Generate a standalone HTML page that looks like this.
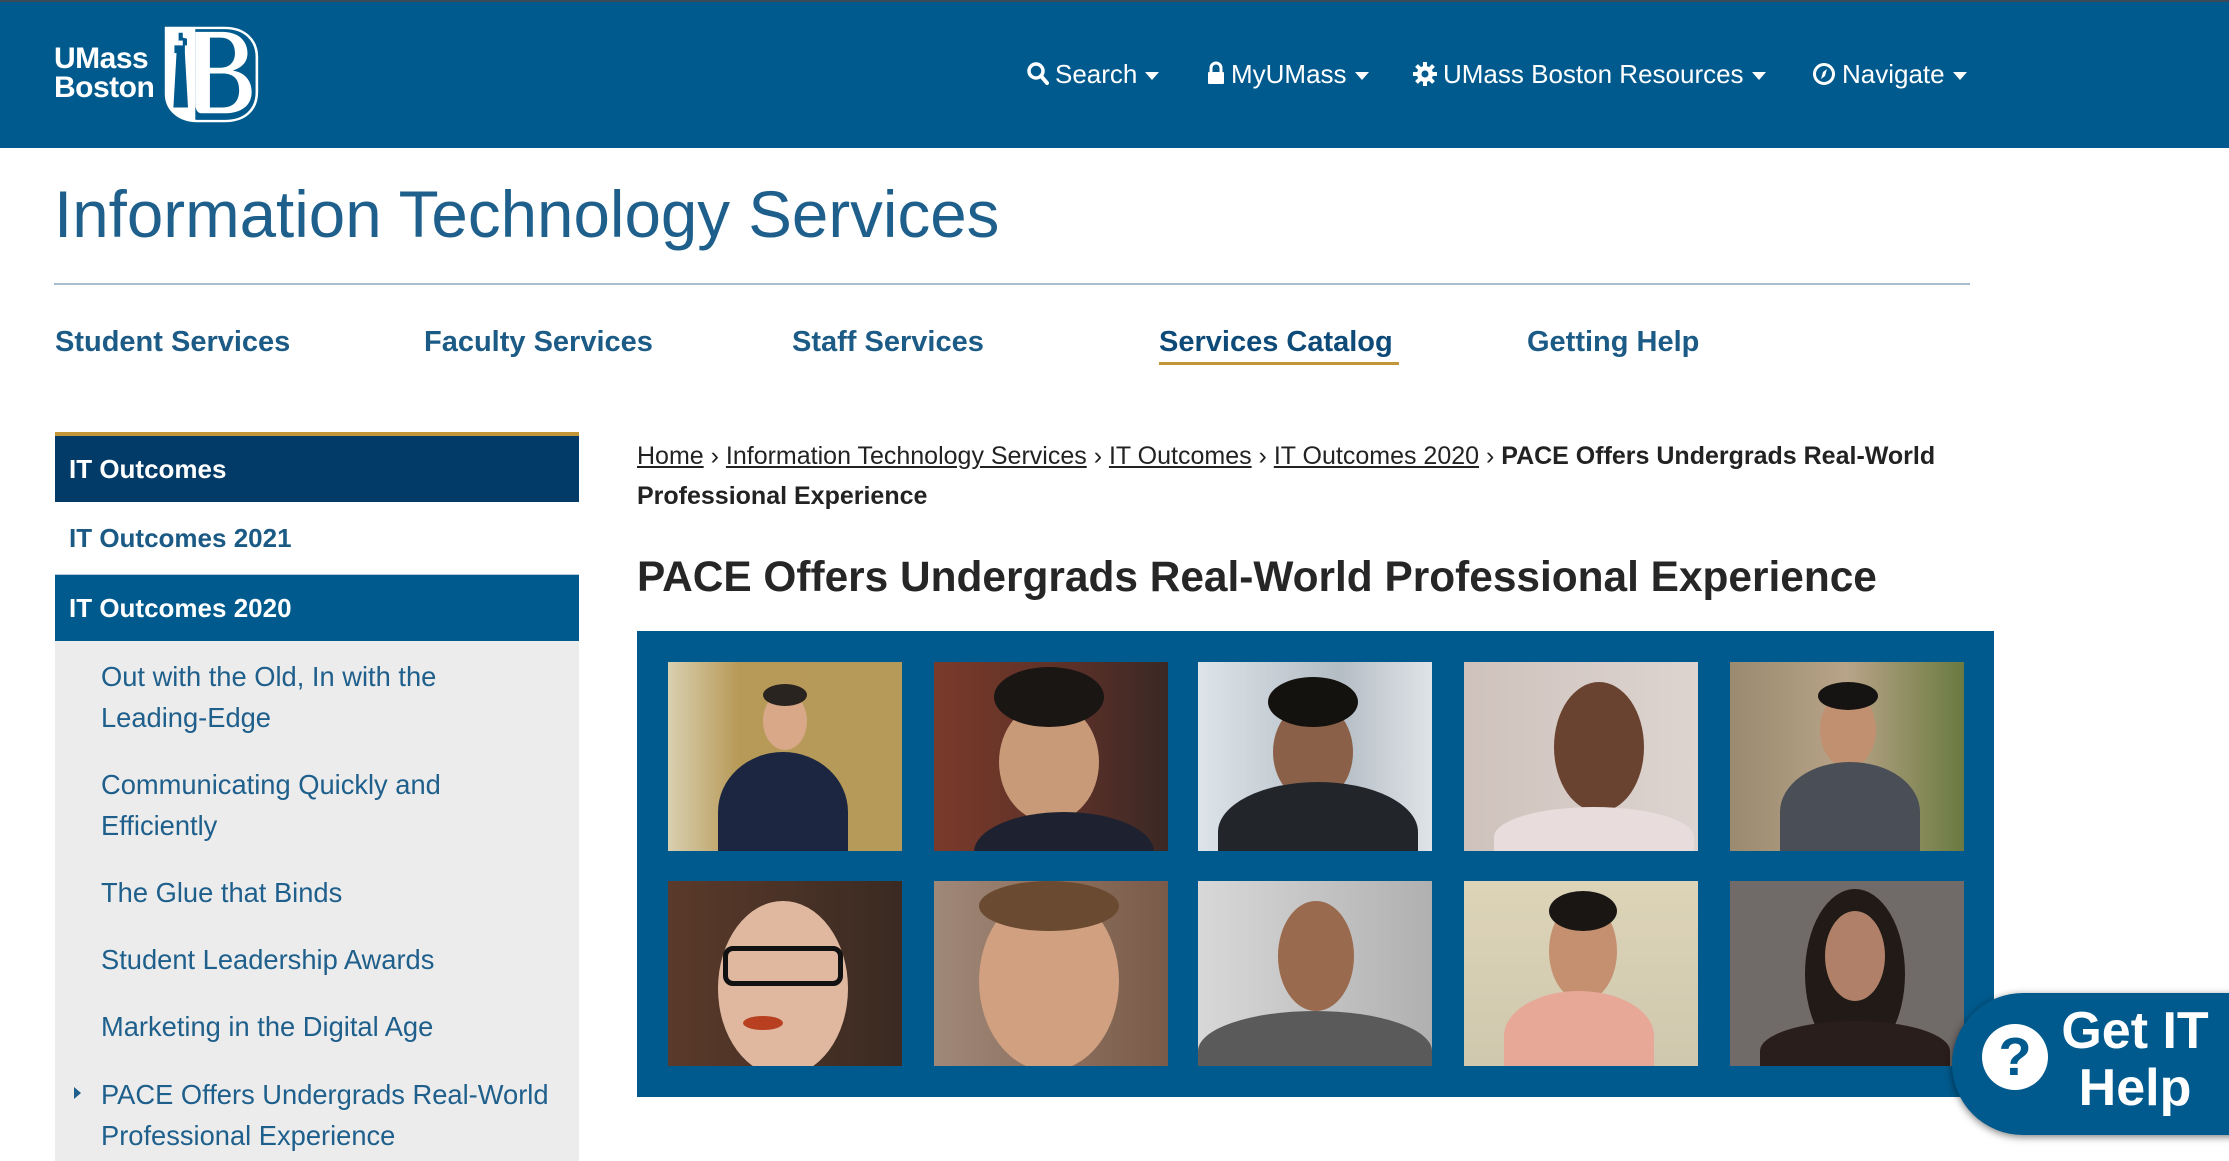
<!DOCTYPE html>
<html><head><meta charset="utf-8"><style>
*{margin:0;padding:0;box-sizing:border-box}
body{width:2229px;height:1147px;overflow:hidden;background:#fff;font-family:"Liberation Sans",Arial,sans-serif;position:relative}
.hdr{position:absolute;left:0;top:0;width:2229px;height:148px;background:#005a8d;border-top:2px solid #3a4a5a}
.abs{position:absolute}
.nav{position:absolute;top:56px;color:#fff;font-size:26px;white-space:nowrap;line-height:36px}
.caret{display:inline-block;width:0;height:0;border-left:7px solid transparent;border-right:7px solid transparent;border-top:8px solid #fff;vertical-align:middle;margin-left:8px}
.title{position:absolute;left:54px;top:177px;font-size:65.5px;color:#1e5f8c;white-space:nowrap}
.rule{position:absolute;left:54px;top:283px;width:1916px;height:2px;background:#a9bfd0}
.menu{position:absolute;top:326px;font-size:29px;font-weight:bold;color:#1c5b86;white-space:nowrap}
.side{position:absolute;left:55px;width:524px}
.sb{font-size:26px;font-weight:bold;padding-left:14px;color:#fff}
.sub{position:absolute;left:101px;font-size:27.3px;color:#1e5f8c;line-height:41px;white-space:nowrap}
.bc{position:absolute;left:637px;top:436px;font-size:25px;line-height:40px;color:#222;width:1360px}
.bc a{color:#222;text-decoration:underline}
.h1{position:absolute;left:637px;top:553px;font-size:42.4px;font-weight:bold;color:#262626;white-space:nowrap}
.pbox{position:absolute;left:637px;top:631px;width:1357px;height:466px;background:#005a8d}
.ph{position:absolute;width:234px;overflow:hidden}
.face{position:absolute;border-radius:50%}
.body{position:absolute;border-radius:50% 50% 0 0}
.help{position:absolute;left:1952px;top:993px;width:320px;height:142px;background:#005a8d;border-radius:71px 0 0 71px;box-shadow:0 2px 8px rgba(0,0,0,.5)}
</style></head><body>
<div class="hdr"></div>
<div class="abs" style="left:54px;top:44px;color:#fff;font-weight:bold;font-size:30px;line-height:29px;letter-spacing:-0.5px">UMass<br>Boston</div>
<svg class="abs" style="left:164px;top:26px" width="96" height="97" viewBox="0 0 92 100" preserveAspectRatio="none">
<path d="M2 2 H58 C78 2 89 15 89 32 V68 C89 86 78 98 58 98 H32 C14 98 2 86 2 70 Z" fill="none" stroke="#fff" stroke-width="2.5"/>
<path d="M2 2 H30 V98 C12 96 2 86 2 70 Z" fill="#fff"/>
<path d="M14 7 h4 v5 l4 1 v7 h-2 v8 l3 56 h-14 l3 -56 h-2 v-8 h4 z" fill="#005a8d"/>
<rect x="14" y="15" width="4" height="5" fill="#fff"/>
<path d="M30 6 H56 C72 6 80 16 80 28 C80 38 74 43 66 46 C78 48 84 57 84 68 C84 82 74 90 58 90 H36 C32 90 30 86 30 80 Z M44 12 V43 H54 C64 43 68 36 68 28 C68 18 63 12 54 12 Z M44 49 V84 H56 C67 84 72 77 72 66 C72 54 66 49 56 49 Z" fill="#fff" fill-rule="evenodd"/>
</svg>
<!-- nav -->
<div class="nav" style="left:1027px"><svg width="22" height="24" viewBox="0 0 22 24" style="vertical-align:-3px;margin-right:6px"><circle cx="9" cy="9" r="7" fill="none" stroke="#fff" stroke-width="3.5"/><path d="M14 14 L20 21" stroke="#fff" stroke-width="4" stroke-linecap="round"/></svg>Search<span class="caret"></span></div>
<div class="nav" style="left:1207px"><svg width="18" height="24" viewBox="0 0 18 24" style="vertical-align:-2px;margin-right:6px"><path d="M4 11 V7 a5 5 0 0 1 10 0 V11" fill="none" stroke="#fff" stroke-width="3"/><rect x="1" y="11" width="16" height="12" rx="1" fill="#fff"/></svg>MyUMass<span class="caret"></span></div>
<div class="nav" style="left:1413px"><svg width="24" height="24" viewBox="0 0 24 24" style="vertical-align:-3px;margin-right:6px"><g fill="#fff"><circle cx="12" cy="12" r="8"/><rect x="10" y="0" width="4" height="24"/><rect x="0" y="10" width="24" height="4"/><rect x="10" y="0" width="4" height="24" transform="rotate(45 12 12)"/><rect x="10" y="0" width="4" height="24" transform="rotate(-45 12 12)"/></g><circle cx="12" cy="12" r="3.5" fill="#005a8d"/></svg>UMass Boston Resources<span class="caret"></span></div>
<div class="nav" style="left:1812px"><svg width="24" height="24" viewBox="0 0 24 24" style="vertical-align:-3px;margin-right:6px"><circle cx="12" cy="12" r="9.5" fill="none" stroke="#fff" stroke-width="3"/><path d="M15 7 L13 14 L9 17 L11 10 Z" fill="#fff"/></svg>Navigate<span class="caret"></span></div>

<div class="title">Information Technology Services</div>
<div class="rule"></div>
<div class="menu" style="left:55px">Student Services</div>
<div class="menu" style="left:424px">Faculty Services</div>
<div class="menu" style="left:792px">Staff Services</div>
<div class="menu" style="left:1159px;color:#0e4a78">Services Catalog</div>
<div class="abs" style="left:1159px;top:362px;width:240px;height:3px;background:#c4963a"></div>
<div class="menu" style="left:1527px">Getting Help</div>

<!-- sidebar -->
<div class="side" style="top:432px;height:4px;background:#c4963a"></div>
<div class="side sb" style="top:436px;height:66px;background:#023b68;line-height:66px">IT Outcomes</div>
<div class="side sb" style="top:502px;height:72px;line-height:72px;color:#1a5a85">IT Outcomes 2021</div>
<div class="side sb" style="top:574px;height:67px;background:#005a8d;line-height:67px;border-top:1px solid #b8cad8">IT Outcomes 2020</div>
<div class="side" style="top:641px;height:520px;background:#ececec"></div>
<div class="sub" style="top:656px">Out with the Old, In with the<br>Leading-Edge</div>
<div class="sub" style="top:764px">Communicating Quickly and<br>Efficiently</div>
<div class="sub" style="top:872px">The Glue that Binds</div>
<div class="sub" style="top:939px">Student Leadership Awards</div>
<div class="sub" style="top:1006px">Marketing in the Digital Age</div>
<div class="abs" style="left:74px;top:1087px;width:0;height:0;border-top:6px solid transparent;border-bottom:6px solid transparent;border-left:7px solid #1e5f8c"></div>
<div class="sub" style="top:1074px">PACE Offers Undergrads Real-World<br>Professional Experience</div>

<div class="bc"><a>Home</a> › <a>Information Technology Services</a> › <a>IT Outcomes</a> › <a>IT Outcomes 2020</a> › <b>PACE Offers Undergrads Real-World Professional Experience</b></div>
<div class="h1">PACE Offers Undergrads Real-World Professional Experience</div>

<div class="pbox"></div>
<!-- row 1 -->
<div class="ph" style="left:668px;top:662px;height:189px;background:linear-gradient(90deg,#d8d0b0 0%,#b89a58 30%,#b59a5a 100%)"><div class="face" style="left:95px;top:30px;width:44px;height:58px;background:#d8a888"></div><div class="face" style="left:95px;top:22px;width:44px;height:22px;background:#2a2420"></div><div class="body" style="left:50px;top:90px;width:130px;height:120px;background:#1c2640"></div></div>
<div class="ph" style="left:934px;top:662px;height:189px;background:linear-gradient(90deg,#7a3a2a,#5a3028 60%,#3a2824)"><div class="face" style="left:65px;top:40px;width:100px;height:120px;background:#c89a78"></div><div class="face" style="left:60px;top:5px;width:110px;height:60px;background:#1a1614"></div><div class="body" style="left:40px;top:150px;width:180px;height:80px;background:#1e2230"></div></div>
<div class="ph" style="left:1198px;top:662px;height:189px;background:linear-gradient(90deg,#dde4ea,#b4bcc4 60%,#e0e4e8)"><div class="face" style="left:75px;top:40px;width:80px;height:100px;background:#8a6048"></div><div class="face" style="left:70px;top:15px;width:90px;height:50px;background:#14120f"></div><div class="body" style="left:20px;top:120px;width:200px;height:100px;background:#22262a"></div></div>
<div class="ph" style="left:1464px;top:662px;height:189px;background:linear-gradient(90deg,#cfc2bc,#ddd4d0)"><div class="face" style="left:90px;top:20px;width:90px;height:130px;background:#6a4230"></div><div class="body" style="left:30px;top:145px;width:200px;height:60px;background:#e8dcdc"></div></div>
<div class="ph" style="left:1730px;top:662px;height:189px;background:linear-gradient(90deg,#9a8a70,#b8a488 50%,#6a7a40)"><div class="face" style="left:90px;top:30px;width:56px;height:76px;background:#c09070"></div><div class="face" style="left:88px;top:20px;width:60px;height:28px;background:#161412"></div><div class="body" style="left:50px;top:100px;width:140px;height:100px;background:#4a4e56"></div></div>
<!-- row 2 -->
<div class="ph" style="left:668px;top:881px;height:185px;background:linear-gradient(90deg,#5a3a2a,#3a2a22)"><div class="face" style="left:50px;top:20px;width:130px;height:175px;background:#e0b8a0"></div><div class="abs" style="left:55px;top:65px;width:120px;height:40px;border:5px solid #111;border-radius:10px"></div><div class="face" style="left:75px;top:135px;width:40px;height:14px;background:#b84020"></div></div>
<div class="ph" style="left:934px;top:881px;height:185px;background:linear-gradient(90deg,#a08878,#7a5a48)"><div class="face" style="left:45px;top:10px;width:140px;height:180px;background:#d0a080"></div><div class="face" style="left:45px;top:0px;width:140px;height:50px;background:#6a4a30"></div></div>
<div class="ph" style="left:1198px;top:881px;height:185px;background:linear-gradient(90deg,#d8d8d8,#b0b0b0)"><div class="face" style="left:80px;top:20px;width:76px;height:110px;background:#9a6a4e"></div><div class="body" style="left:0px;top:130px;width:234px;height:80px;background:#5a5a5a"></div></div>
<div class="ph" style="left:1464px;top:881px;height:185px;background:linear-gradient(180deg,#ddd4b8,#cfc8ae)"><div class="face" style="left:85px;top:20px;width:68px;height:100px;background:#c49070"></div><div class="face" style="left:85px;top:10px;width:68px;height:40px;background:#1a1614"></div><div class="body" style="left:40px;top:110px;width:150px;height:90px;background:#e8a898"></div></div>
<div class="ph" style="left:1730px;top:881px;height:185px;background:#706a68"><div class="face" style="left:75px;top:8px;width:100px;height:170px;background:#221a16"></div><div class="face" style="left:95px;top:30px;width:60px;height:90px;background:#b08068"></div><div class="body" style="left:30px;top:140px;width:190px;height:60px;background:#2a1e1c"></div></div>

<div class="help">
<div class="abs" style="left:30px;top:31px;width:66px;height:66px;border-radius:50%;background:#fff;color:#005a8d;font-size:54px;font-weight:bold;text-align:center;line-height:66px">?</div>
<div class="abs" style="left:108px;top:10px;color:#fff;font-size:52px;line-height:57px;font-weight:bold;text-align:center;width:150px">Get IT<br>Help</div>
</div>
</body></html>
